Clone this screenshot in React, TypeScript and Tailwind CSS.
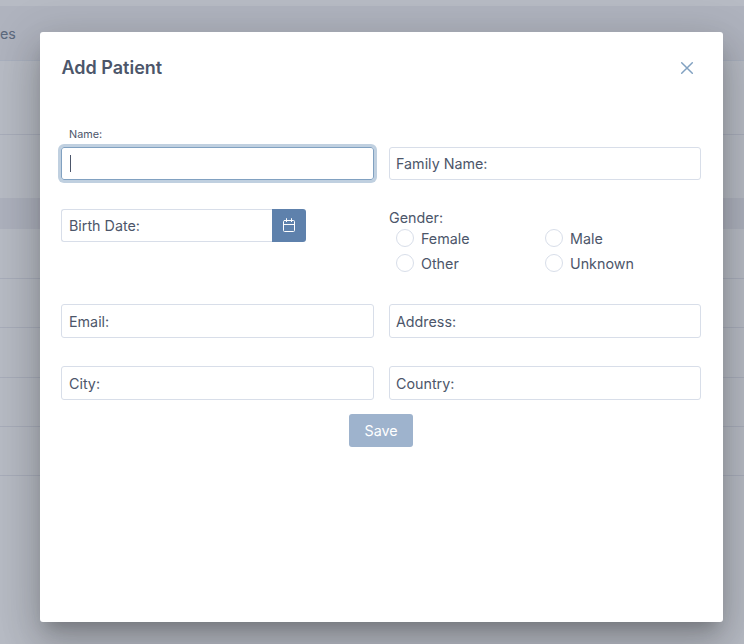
import { useState } from "react";

function Field({ label, tall = false, inset = false }: { label: string; tall?: boolean; inset?: boolean }) {
  return (
    <div
      className={`flex w-full items-center rounded-[3px] border border-[#d8dee9] bg-white ${
        tall ? "h-[34px] pt-[2px]" : "h-[33px] pt-px"
      } ${inset ? "pl-[7px]" : "pl-[6px]"}`}
    >
      {label}
    </div>
  );
}

function Radio({ label, checked, onSelect }: { label: string; checked: boolean; onSelect: () => void }) {
  return (
    <button type="button" onClick={onSelect} className="flex h-[18px] items-center gap-[7px]">
      <span className="flex size-[18px] items-center justify-center rounded-full border border-[#d8dee9] bg-white">
        {checked && <span className="size-[10px] rounded-full bg-[#5e81ac]" />}
      </span>
      <span className="pt-[2px] leading-[18px]">{label}</span>
    </button>
  );
}

function CalendarIcon() {
  return (
    <svg width="14" height="14" viewBox="0 0 14 14" fill="none" stroke="#fff" strokeWidth="1" strokeLinecap="round">
      <rect x="1.5" y="2.5" width="11" height="11" rx="1" />
      <path d="M1.5 6.5h11M4.5 0.6v3M9.5 0.6v3" />
    </svg>
  );
}

function CloseIcon() {
  return (
    <svg width="14" height="14" viewBox="0 0 14 14" fill="none" stroke="#81a1c1" strokeWidth="1.5" strokeLinecap="round">
      <path d="M1.7 1.7l10.6 10.6M12.3 1.7L1.7 12.3" />
    </svg>
  );
}

function Backdrop() {
  return (
    <div className="absolute inset-0 flex flex-col bg-[#b7bbc4] text-[#5c697d]">
      <div className="h-[6px]" />
      <div className="h-[55px] border-b border-[#a9b0be] bg-[#afb3be] pt-[18px] leading-5">es</div>
      <div className="h-[74px] border-b border-[#a8adba]" />
      <div className="h-[63px]" />
      <div className="h-[31px] bg-[#adb1bd]" />
      <div className="h-[50px] border-b border-[#a8adba]" />
      <div className="h-[49px] border-b border-[#a8adba]" />
      <div className="h-[50px] border-b border-[#a8adba]" />
      <div className="h-[49px] border-b border-[#a8adba]" />
      <div className="h-[49px] border-b border-[#a8adba]" />
    </div>
  );
}

export default function App() {
  const [gender, setGender] = useState("");
  return (
    <div className="relative h-[644px] w-[744px] overflow-hidden font-[Inter,sans-serif] text-[14.3px] text-[#4c566a]">
      <Backdrop />
      <div
        role="dialog"
        className="absolute left-[40px] top-[32px] h-[590px] w-[683px] rounded-[3px] bg-white px-[21px] shadow-[0_11px_15px_-7px_rgba(0,0,0,0.2),0_24px_38px_3px_rgba(0,0,0,0.14),0_9px_46px_8px_rgba(0,0,0,0.12)]"
      >
        <header className="flex h-[72px] items-center justify-between pr-[8px]">
          <h1 className="pb-[2px] pl-[0.5px] text-[18px] font-semibold">Add Patient</h1>
          <button type="button" aria-label="Close">
            <CloseIcon />
          </button>
        </header>

        <div className="flex h-[43px] items-end pb-[5px] pl-[8px] text-[10.8px] leading-[14px]">Name:</div>
        <div className="grid grid-cols-[313px_312px] gap-x-[15px]">
          <div className="flex h-[33px] items-center rounded-[3px] border border-[#81a1c1] pl-[8px] shadow-[0_0_0_3px_#c0d0e0]">
            <span className="h-[17px] w-px bg-[#4c566a]" />
          </div>
          <Field label="Family Name:" />
        </div>

        <div className="mt-[29px] grid h-[95px] grid-cols-[313px_312px] gap-x-[15px]">
          <div className="flex items-start">
            <div className="flex h-[33px] w-[211px] items-center rounded-l-[3px] border border-r-0 border-[#d8dee9] pl-[7px] pt-px">
              Birth Date:
            </div>
            <button
              type="button"
              aria-label="Choose date"
              className="flex h-[33px] w-[34px] items-center justify-center rounded-r-[3px] bg-[#5e81ac] pb-px"
            >
              <CalendarIcon />
            </button>
          </div>
          <div>
            <div className="h-[20px] leading-[18px]">Gender:</div>
            <div className="grid grid-cols-[149px_149px] gap-y-[7px] pl-[7px]">
              {["Female", "Male", "Other", "Unknown"].map((g) => (
                <Radio key={g} label={g} checked={gender === g} onSelect={() => setGender(g)} />
              ))}
            </div>
          </div>
        </div>

        <div className="grid grid-cols-[313px_312px] gap-x-[15px] gap-y-[28px]">
          <Field label="Email:" tall inset />
          <Field label="Address:" tall />
          <Field label="City:" tall inset />
          <Field label="Country:" tall />
        </div>

        <div className="mt-[14px] flex justify-center pr-px">
          <button type="button" className="h-[33px] w-[64px] rounded-[3px] bg-[#9eb3cd] text-white">
            Save
          </button>
        </div>
      </div>
    </div>
  );
}
